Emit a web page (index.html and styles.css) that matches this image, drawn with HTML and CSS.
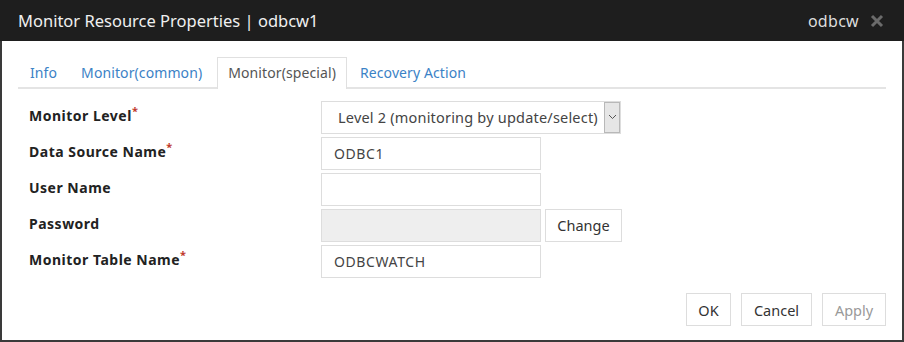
FILE: index.html
```html
<!DOCTYPE html>
<html>

<head>
    <link rel="stylesheet" href="styles.css">
</head>

<body>
    <div class="dialog">
        <div class="header">
            <span class="title">Monitor Resource Properties | odbcw1</span>
            <span class="type">odbcw</span>
            <span class="close">
                <svg width="14" height="14" viewBox="0 0 14 14"><path d="M2 2 L12 12 M12 2 L2 12" stroke="#6b6b6b" stroke-width="3"/></svg>
            </span>
        </div>
        <div class="content">
            <div class="tabs">
                <span class="tab">Info</span>
                <span class="tab">Monitor(common)</span>
                <span class="tab active">Monitor(special)</span>
                <span class="tab">Recovery Action</span>
            </div>
            <div class="form">
                <div class="row">
                    <label>Monitor Level<span class="req">*</span></label>
                    <div class="select">
                        <span class="value">Level 2 (monitoring by update/select)</span>
                        <span class="arrow">
                            <svg width="9" height="6" viewBox="0 0 9 6"><path d="M1 1 L4.5 4.5 L8 1" fill="none" stroke="#555" stroke-width="1"/></svg>
                        </span>
                    </div>
                </div>
                <div class="row">
                    <label>Data Source Name<span class="req">*</span></label>
                    <div class="input">ODBC1</div>
                </div>
                <div class="row">
                    <label>User Name</label>
                    <div class="input"></div>
                </div>
                <div class="row">
                    <label>Password</label>
                    <div class="input disabled"></div>
                    <button class="btn change">Change</button>
                </div>
                <div class="row">
                    <label>Monitor Table Name<span class="req">*</span></label>
                    <div class="input">ODBCWATCH</div>
                </div>
            </div>
            <div class="footer">
                <button class="btn ok">OK</button>
                <button class="btn cancel">Cancel</button>
                <button class="btn apply">Apply</button>
            </div>
        </div>
    </div>
</body>

</html>
```

FILE: styles.css
```css
* {
    box-sizing: border-box;
}

body {
    margin: 0;
    font-family: "Noto Sans", "Open Sans", sans-serif;
    color: #333;
}

.dialog {
    width: 904px;
    height: 342px;
    border: 2px solid #3a3a3a;
    border-top: none;
    background: #fff;
}

.header {
    height: 41px;
    margin: 0 -2px;
    background: #1e1e1e;
    display: flex;
    align-items: center;
    padding: 0 20px 0 18px;
    color: #f0f0f0;
}

.title {
    font-size: 16.5px;
    flex: 1;
}

.type {
    font-size: 16px;
    color: #ddd;
    letter-spacing: 0.3px;
}

.close {
    margin-left: 11px;
    display: flex;
}

.content {
    padding: 16px 16px 0 16px;
}

/* tab strip */
.tabs {
    display: flex;
    border-bottom: 2px solid #e4e4e4;
    height: 32px;
    padding-left: 0;
}

.tab {
    font-size: 14px;
    color: #3b82c6;
    padding: 5px 11px 0 11px;
    height: 31px;
    border: 1px solid transparent;
    border-bottom: none;
    letter-spacing: 0.1px;
}

.tab.active {
    color: #555;
    border-color: #e0e0e0;
    background: #fff;
    height: 32px;
    margin-left: 3px;
    margin-right: 1px;
    padding: 5px 10px 0 10px;
}

.form {
    padding: 10px 0 0 11px;
}

.row {
    display: flex;
    align-items: center;
    height: 36px;
}

label {
    width: 292px;
    font-size: 14px;
    font-weight: bold;
    color: #222;
    letter-spacing: 0.5px;
    padding-bottom: 3px;
}

.req {
    color: #c0392b;
    font-size: 11px;
    vertical-align: top;
    position: relative;
    top: -3px;
    letter-spacing: 0;
}

.select {
    width: 300px;
    height: 33px;
    border: 1px solid #ddd;
    display: flex;
    align-items: center;
    font-size: 14.5px;
    color: #444;
    letter-spacing: 0.2px;
}

.select .value {
    flex: 1;
    padding-left: 16px;
}

.select .arrow {
    width: 16px;
    height: 31px;
    background: #e6e6e6;
    border: 1px solid #b8b8b8;
    display: flex;
    align-items: center;
    justify-content: center;
}

.input {
    width: 220px;
    height: 33px;
    border: 1px solid #ddd;
    font-size: 14px;
    color: #444;
    padding: 6px 12px;
    letter-spacing: 0.6px;
}

.input.disabled {
    background: #eeeeee;
}

.btn {
    font-family: "Noto Sans", "Open Sans", sans-serif;
    font-size: 14.5px;
    color: #333;
    background: #fff;
    border: 1px solid #ddd;
    height: 33px;
    padding: 0 10px;
    margin-left: 5px;
}

.change {
    width: 77px;
    margin-left: 4px;
}

.footer {
    display: flex;
    justify-content: flex-end;
    padding-top: 14px;
    padding-right: 0;
}

.footer .btn {
    margin-left: 10px;
}

.ok {
    width: 45px;
}

.cancel {
    width: 71px;
}

.apply {
    width: 64px;
    color: #999;
}
```
